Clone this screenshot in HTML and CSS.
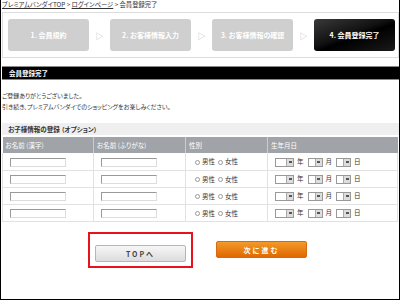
FILE: index.html
```html
<!DOCTYPE html>
<html lang="ja">
<head>
    <meta charset="UTF-8">
    <title>会員登録完了</title>
    <link rel="stylesheet" href="styles.css">
</head>
<body>
<div class="page">
    <div class="crumbs">
        <a href="#">プレミアムバンダイTOP</a> &gt; <a href="#">ログインページ</a> &gt; 会員登録完了
    </div>

    <div class="steps">
        <div class="step">1. 会員規約</div>
        <div class="arrow">▷</div>
        <div class="step">2. お客様情報入力</div>
        <div class="arrow">▷</div>
        <div class="step">3. お客様情報の確認</div>
        <div class="arrow">▷</div>
        <div class="step current">4. 会員登録完了</div>
    </div>

    <div class="title-bar">会員登録完了</div>

    <div class="message">
        <p>ご登録ありがとうございました。</p>
        <p>引き続き、プレミアムバンダイでのショッピングをお楽しみください。</p>
    </div>

    <div class="section-bar">お子様情報の登録 （オプション）</div>

    <table class="kids">
        <tr>
            <th class="c1">お名前 (漢字)</th>
            <th class="c2">お名前 (ふりがな)</th>
            <th class="c3">性別</th>
            <th>生年月日</th>
        </tr>
        <tr>
            <td><span class="field"></span></td>
            <td><span class="field"></span></td>
            <td><span class="radio"></span>男性<span class="radio"></span>女性</td>
            <td><span class="sel wide"></span>年<span class="sel"></span>月<span class="sel"></span>日</td>
        </tr>
        <tr>
            <td><span class="field"></span></td>
            <td><span class="field"></span></td>
            <td><span class="radio"></span>男性<span class="radio"></span>女性</td>
            <td><span class="sel wide"></span>年<span class="sel"></span>月<span class="sel"></span>日</td>
        </tr>
        <tr>
            <td><span class="field"></span></td>
            <td><span class="field"></span></td>
            <td><span class="radio"></span>男性<span class="radio"></span>女性</td>
            <td><span class="sel wide"></span>年<span class="sel"></span>月<span class="sel"></span>日</td>
        </tr>
        <tr>
            <td><span class="field"></span></td>
            <td><span class="field"></span></td>
            <td><span class="radio"></span>男性<span class="radio"></span>女性</td>
            <td><span class="sel wide"></span>年<span class="sel"></span>月<span class="sel"></span>日</td>
        </tr>
    </table>

    <div class="actions">
        <div class="mark"><button class="btn-top">TOPへ</button></div>
        <button class="btn-next">次に進む</button>
    </div>
</div>
</body>
</html>
```

FILE: styles.css
```css
* {
    box-sizing: border-box;
}

body {
    margin: 0;
    font-family: "Noto Sans CJK JP", "Liberation Sans", sans-serif;
    font-feature-settings: "palt";
    color: #333;
    background: #fff;
}

.page {
    width: 400px;
    height: 300px;
    border-left: 1px solid #000;
    border-right: 1px solid #000;
    border-bottom: 1px solid #000;
    padding: 0 1px 0 1px;
}

.crumbs {
    height: 12px;
    font-size: 6.3px;
    line-height: 10px;
    color: #333;
}

.crumbs a {
    color: #333;
}

/* step indicator */
.steps {
    width: 397px;
    height: 46px;
    border: 1px solid #ddd;
    display: flex;
    align-items: center;
    padding-left: 5px;
}

.step {
    width: 81px;
    height: 32px;
    border-radius: 3px;
    background: #cfcfcf;
    color: #fff;
    font-size: 7px;
    font-weight: bold;
    display: flex;
    align-items: center;
    justify-content: center;
}

.step.current {
    background: linear-gradient(160deg, #3a3a3a 0%, #111 45%, #000 55%, #1a1a1a 100%);
}

.arrow {
    width: 21px;
    text-align: center;
    color: #bbb;
    font-size: 8px;
}

.title-bar {
    margin-top: 8px;
    width: 397px;
    height: 14px;
    background: #000;
    border-top: 1px solid #888;
    border-bottom: 1px solid #888;
    color: #fff;
    font-size: 6.5px;
    font-weight: bold;
    line-height: 12px;
    padding-left: 7px;
}

.message {
    padding-top: 10px;
    font-size: 6px;
}

.message p {
    margin: 0;
    line-height: 11px;
}

.section-bar {
    margin-top: 11px;
    width: 397px;
    height: 12px;
    background: #efefef;
    font-size: 6.5px;
    font-weight: bold;
    line-height: 12px;
    padding-left: 6px;
}

.kids {
    margin-top: 2px;
    width: 396px;
    border-collapse: collapse;
    font-size: 6.5px;
}

.kids th {
    background: #a0a4a8;
    color: #fff;
    font-weight: normal;
    text-align: left;
    height: 16px;
    padding: 0 0 0 3px;
    border-left: 1px solid #ccc;
}

.kids th:first-child {
    border-left: none;
}

.kids .c1 { width: 91px; }
.kids .c2 { width: 92px; }
.kids .c3 { width: 82px; }

.kids td {
    height: 17px;
    padding: 0 0 0 7px;
    border: 1px solid #e2e2e2;
    border-top: none;
    vertical-align: middle;
}

.kids td:nth-child(3) {
    padding-left: 9px;
}

.field {
    display: inline-block;
    vertical-align: middle;
    width: 56px;
    height: 9px;
    border: 1px solid #999;
    border-right-color: #ddd;
    border-bottom-color: #ddd;
}

.radio {
    display: inline-block;
    vertical-align: middle;
    width: 5px;
    height: 5px;
    border: 1px solid #999;
    border-radius: 50%;
    margin: 0 2px 0 3px;
}

.radio:first-child {
    margin-left: 0;
}

.sel {
    display: inline-block;
    vertical-align: middle;
    position: relative;
    width: 15px;
    height: 9px;
    border: 1px solid #999;
    margin: 0 3px 0 4px;
}

.sel.wide {
    width: 19px;
    margin-left: 0;
}

.sel::after {
    content: "";
    position: absolute;
    right: 0;
    top: 0;
    width: 6px;
    height: 7px;
    background: #ddd linear-gradient(#555, #555) no-repeat center / 3px 2px;
    border-left: 1px solid #aaa;
}

/* buttons */
.actions {
    margin-top: 10px;
    display: flex;
    align-items: center;
    padding-left: 86px;
    gap: 23px;
}

.mark {
    border: 2px solid #e8121c;
    padding: 4px 5px;
}

.btn-top,
.btn-next {
    width: 91px;
    height: 17px;
    border-radius: 2px;
    font-family: "Noto Sans CJK JP", "Liberation Sans", sans-serif;
    font-size: 7px;
    font-weight: bold;
    letter-spacing: 2px;
    padding: 0;
    cursor: pointer;
}

.btn-top {
    background: linear-gradient(#f7f7f7, #dcdcdc);
    border: 1px solid #b5b5b5;
    color: #444;
}

.btn-next {
    background: linear-gradient(#f39a2a, #e06800);
    border: 1px solid #d66a10;
    color: #fff;
}
```
